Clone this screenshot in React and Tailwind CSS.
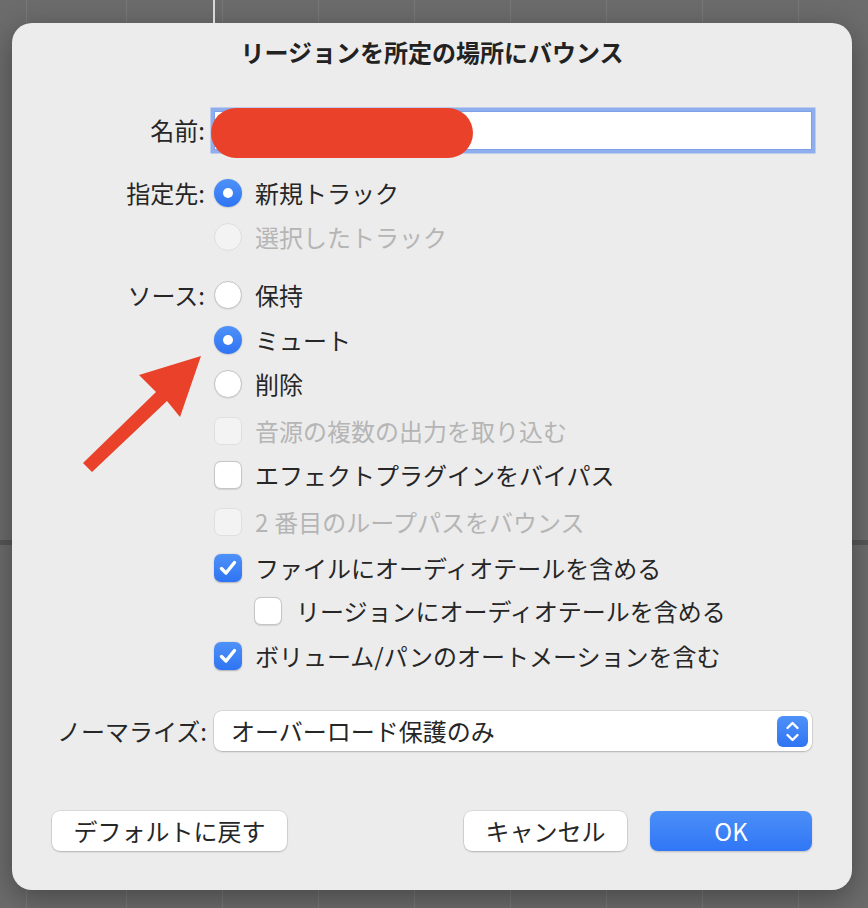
import React from "react";

function Radio({ state }) {
  if (state === "on")
    return (
      <div className="flex h-[28px] w-[28px] shrink-0 items-center justify-center rounded-full bg-gradient-to-b from-[#4e91f8] to-[#2f74f3] shadow-[0_0.5px_1.5px_rgba(0,0,0,0.25)]">
        <div className="h-[10px] w-[10px] rounded-full bg-white" />
      </div>
    );
  if (state === "disabled")
    return <div className="h-[28px] w-[28px] shrink-0 rounded-full border border-[#dedede] bg-[#f3f3f3]" />;
  return (
    <div className="h-[28px] w-[28px] shrink-0 rounded-full border border-[#c6c6c6] bg-white shadow-[0_0.5px_1px_rgba(0,0,0,0.12)]" />
  );
}

function Check({ state }) {
  if (state === "on")
    return (
      <div className="flex h-[28px] w-[28px] shrink-0 items-center justify-center rounded-[7px] bg-gradient-to-b from-[#4e91f8] to-[#2f74f3] shadow-[0_0.5px_1.5px_rgba(0,0,0,0.25)]">
        <svg width="28" height="28" viewBox="0 0 28 28">
          <path d="M7.5 14.5 L12 19 L20.5 8.5" fill="none" stroke="white" strokeWidth="3.4" strokeLinecap="round" strokeLinejoin="round" />
        </svg>
      </div>
    );
  if (state === "disabled")
    return <div className="h-[28px] w-[28px] shrink-0 rounded-[7px] border border-[#dfdfdf] bg-[#f3f3f3]" />;
  return (
    <div className="h-[28px] w-[28px] shrink-0 rounded-[7px] border border-[#c6c6c6] bg-white shadow-[0_0.5px_1px_rgba(0,0,0,0.12)]" />
  );
}

function Label({ children }) {
  return <div className="w-[193px] shrink-0 text-right">{children}</div>;
}

export default function App() {
  return (
    <div className="relative h-[908px] w-[868px] overflow-hidden bg-[#6c6c6c] font-['Noto_Sans_CJK_JP','Noto_Sans',sans-serif] text-[24px] leading-none text-[#262626] [background-image:linear-gradient(180deg,transparent_540px,#575757_540px,#575757_545px,transparent_545px),repeating-linear-gradient(90deg,transparent_0px,transparent_95px,rgba(255,255,255,0.09)_95px,rgba(255,255,255,0.09)_96px)] [background-position:0_0,31px_0]">
      <div className="absolute left-[213px] top-0 h-[23px] w-[2px] bg-[#d8d8d8]" />

      <div className="ml-[12px] mt-[23px] flex h-[867px] w-[840px] flex-col rounded-[20px] bg-[#ececec] shadow-[0_8px_30px_rgba(0,0,0,0.35)]">
        <div className="mt-[14px] flex h-[30px] items-center justify-center font-bold text-[#222]">
          リージョンを所定の場所にバウンス
        </div>

        <div className="mt-[39px] flex h-[48px] items-center">
          <Label>名前:</Label>
          <div className="relative ml-[9px] h-[39px] w-[598px] border border-[#7ea0e8] bg-white ring-[3.5px] ring-[#8eaeee]">
            <div className="absolute left-[-4px] top-[-4px] h-[50px] w-[262px] rounded-full bg-[#e9412a]" />
          </div>
        </div>

        <div className="mt-[17px] flex h-[44px] items-center">
          <Label>指定先:</Label>
          <div className="ml-[9px] flex items-center gap-[13px]">
            <Radio state="on" />
            <span>新規トラック</span>
          </div>
        </div>
        <div className="flex h-[44px] items-center">
          <Label />
          <div className="ml-[9px] flex items-center gap-[13px] text-[#b5b5b5]">
            <Radio state="disabled" />
            <span>選択したトラック</span>
          </div>
        </div>

        <div className="mt-[14px] flex h-[44px] items-center">
          <Label>ソース:</Label>
          <div className="ml-[9px] flex items-center gap-[13px]">
            <Radio state="off" />
            <span>保持</span>
          </div>
        </div>
        <div className="mt-[1px] flex h-[44px] items-center">
          <Label />
          <div className="ml-[9px] flex items-center gap-[13px]">
            <Radio state="on" />
            <span>ミュート</span>
          </div>
        </div>
        <div className="flex h-[44px] items-center">
          <Label />
          <div className="ml-[9px] flex items-center gap-[13px]">
            <Radio state="off" />
            <span>削除</span>
          </div>
        </div>

        <div className="mt-[3px] flex h-[44px] items-center">
          <Label />
          <div className="ml-[9px] flex items-center gap-[13px] text-[#b5b5b5]">
            <Check state="disabled" />
            <span>音源の複数の出力を取り込む</span>
          </div>
        </div>
        <div className="flex h-[44px] items-center">
          <Label />
          <div className="ml-[9px] flex items-center gap-[13px]">
            <Check state="off" />
            <span>エフェクトプラグインをバイパス</span>
          </div>
        </div>
        <div className="mt-[3px] flex h-[44px] items-center">
          <Label />
          <div className="ml-[9px] flex items-center gap-[13px] text-[#b5b5b5]">
            <Check state="disabled" />
            <span>
              <span className="mr-[6px]">2</span>番目のループパスをバウンス
            </span>
          </div>
        </div>
        <div className="mt-[2px] flex h-[43px] items-center">
          <Label />
          <div className="ml-[9px] flex items-center gap-[13px]">
            <Check state="on" />
            <span>ファイルにオーディオテールを含める</span>
          </div>
        </div>
        <div className="flex h-[44px] items-center">
          <Label />
          <div className="ml-[49px] flex items-center gap-[14px]">
            <Check state="off" />
            <span>リージョンにオーディオテールを含める</span>
          </div>
        </div>
        <div className="mt-[1px] flex h-[44px] items-center">
          <Label />
          <div className="ml-[9px] flex items-center gap-[13px]">
            <Check state="on" />
            <span>ボリューム/パンのオートメーションを含む</span>
          </div>
        </div>

        <div className="mt-[33px] flex h-[40px] items-center">
          <div className="w-[195px] shrink-0 text-right">ノーマライズ:</div>
          <div className="ml-[7px] flex h-[40px] w-[598px] items-center justify-between rounded-[8px] bg-white pl-[17px] pr-[4px] shadow-[0_0_0_0.5px_rgba(0,0,0,0.15),0_1px_2px_rgba(0,0,0,0.18)]">
            <span>オーバーロード保護のみ</span>
            <div className="flex h-[31px] w-[31px] items-center justify-center rounded-[6px] bg-gradient-to-b from-[#4e91f8] to-[#2f74f3]">
              <svg width="31" height="31" viewBox="0 0 31 31">
                <path d="M10.5 12 L15.5 7 L20.5 12" fill="none" stroke="white" strokeWidth="2.4" strokeLinecap="round" strokeLinejoin="round" />
                <path d="M10.5 19 L15.5 24 L20.5 19" fill="none" stroke="white" strokeWidth="2.4" strokeLinecap="round" strokeLinejoin="round" />
              </svg>
            </div>
          </div>
        </div>

        <div className="mt-[60px] flex items-center px-[40px]">
          <div className="flex h-[40px] w-[235px] items-center justify-center rounded-[8px] bg-white shadow-[0_0_0_0.5px_rgba(0,0,0,0.15),0_1px_2px_rgba(0,0,0,0.18)]">
            デフォルトに戻す
          </div>
          <div className="flex-1" />
          <div className="flex h-[40px] w-[163px] items-center justify-center rounded-[8px] bg-white shadow-[0_0_0_0.5px_rgba(0,0,0,0.15),0_1px_2px_rgba(0,0,0,0.18)]">
            キャンセル
          </div>
          <div className="ml-[23px] flex h-[40px] w-[162px] items-center justify-center rounded-[8px] bg-gradient-to-b from-[#4b8ff8] to-[#3176f5] text-white shadow-[0_1px_2px_rgba(0,0,0,0.2)]">
            OK
          </div>
        </div>
      </div>

      <svg className="pointer-events-none absolute left-0 top-0" width="868" height="908" viewBox="0 0 868 908">
        <polygon points="201,356 180,417 167,401 92,472 83,463 156,392 139,375" fill="#e9412a" />
      </svg>
    </div>
  );
}
